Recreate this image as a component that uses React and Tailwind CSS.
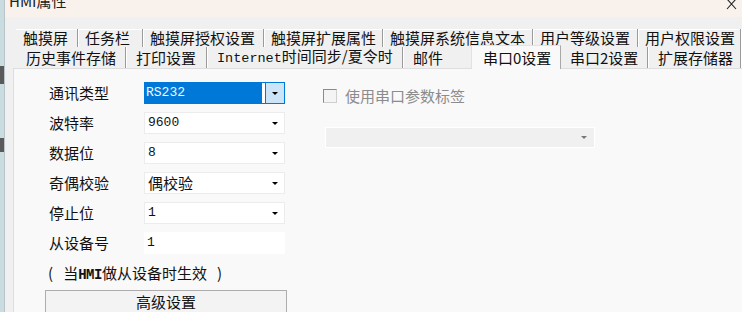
import React from "react";

const CJK = { fontFamily: '"Noto Sans CJK SC", "Noto Sans", sans-serif' };
const MONO = { fontFamily: '"Liberation Mono", "Noto Sans CJK SC", monospace' };

function Arrow({ color = "border-t-black" }) {
  return <div className={`w-0 h-0 border-x-[3px] border-t-[3px] border-x-transparent ${color}`} />;
}

function Tab({ w, children, pl = "pl-[7px]" }) {
  return (
    <div
      className={`h-full flex items-center ${pl} border-r border-r-[#9a9a9a] shadow-[1px_0_0_#ffffff] shrink-0 whitespace-nowrap`}
      style={{ width: w }}
    >
      {children}
    </div>
  );
}

function Combo({ value, mono = true }) {
  return (
    <div className="flex h-[22px] w-[141px] bg-white border border-[#ececec]">
      <div
        className={`flex-1 flex items-center pl-[3px] text-[#111] ${mono ? "text-[13px]" : "text-[15px]"}`}
        style={mono ? MONO : CJK}
      >
        {value}
      </div>
      <div className="w-[19px] flex items-center justify-center">
        <Arrow />
      </div>
    </div>
  );
}

function Row({ label, children }) {
  return (
    <div className="flex items-center h-[22px]">
      <div className="w-[99px] pl-[4px] text-[15px] leading-[22px] text-[#111]">{label}</div>
      {children}
    </div>
  );
}

export default function App() {
  return (
    <div className="w-[742px] h-[312px] overflow-hidden flex bg-[#c8dce0]" style={CJK}>
      {/* desktop strip */}
      <div className="w-[4px] shrink-0 flex flex-col">
        <div className="h-[66px] bg-[#c9dce0]" />
        <div className="h-[18px] bg-[#5a5a5a]" />
        <div className="h-[54px] bg-[#c9dce0]" />
        <div className="h-[14px] bg-[#5a5a5a]" />
        <div className="flex-1 bg-[#c9dce0]" />
      </div>
      {/* window */}
      <div className="flex-1 flex flex-col bg-[#f0f0f0] border-l border-[#b9c4c8] min-w-0">
        {/* title bar */}
        <div className="h-[17px] shrink-0 bg-[#f9f2ec] flex items-start justify-between overflow-hidden">
          <div className="ml-[4px] mt-[-9px] text-[15px] leading-[20px] text-[#222]">HMI属性</div>
          <svg width="12" height="10" viewBox="0 0 12 10" className="mr-[4px]">
            <path d="M1 -1 L10 9 M10 -1 L1 9" stroke="#222" strokeWidth="1.1" fill="none" />
          </svg>
        </div>
        <div className="h-[12px] shrink-0" />
        {/* tab row 1 */}
        <div className="h-[18px] shrink-0 flex ml-[11px] text-[15px] leading-[18px] text-[#111] shadow-[inset_0_1px_0_#ffffff]">
          <Tab w={62}>触摸屏</Tab>
          <Tab w={65}>任务栏</Tab>
          <Tab w={121}>触摸屏授权设置</Tab>
          <Tab w={119}>触摸屏扩展属性</Tab>
          <Tab w={150}>触摸屏系统信息文本</Tab>
          <Tab w={105}>用户等级设置</Tab>
          <Tab w={103}>用户权限设置</Tab>
        </div>
        {/* tab row 2 */}
        <div className="h-[21px] shrink-0 flex items-start ml-[11px] text-[15px] leading-[18px] text-[#111]">
          <Tab w={110} pl="pl-[10px]">历史事件存储</Tab>
          <Tab w={81} pl="pl-[10px]">打印设置</Tab>
          <Tab w={196} pl="pl-[10px]">
            <span className="whitespace-nowrap leading-[18px]">
              <span className="text-[13.5px]" style={MONO}>Internet</span>时间同步/夏令时
            </span>
          </Tab>
          <div className="h-full w-[68px] shrink-0 flex items-center pl-[10px]">邮件</div>
          <div className="relative z-10 mt-[-2px] h-[24px] w-[90px] shrink-0 flex items-center pl-[11px] bg-[#f9f9f9] border-l border-t border-r border-l-[#e2e2e2] border-t-[#e2e2e2] border-r-[#a8a8a8]">
            串口0设置
          </div>
          <Tab w={87} pl="pl-[9px]">串口2设置</Tab>
          <Tab w={93} pl="pl-[10px]">扩展存储器</Tab>
        </div>
        {/* panel */}
        <div className="flex-1 ml-[8px] bg-[#f9f9f9] border-l border-t border-[#dedede] flex pt-[13px] pl-[31px]">
          {/* left form */}
          <div className="w-[242px] shrink-0 flex flex-col">
            <div className="flex flex-col gap-[8px]">
              <Row label="通讯类型">
                <div className="flex h-[22px] w-[141px] bg-white border border-[#0078d7]">
                  <div className="flex-1 flex items-center pl-[1px] bg-[#0078d7] text-[13px] text-[#f4f8ff]" style={MONO}>
                    RS232
                  </div>
                  <div className="w-[3px]" />
                  <div className="w-[19px] flex items-center justify-center bg-[#cce4f7] border-l border-[#0078d7]">
                    <Arrow />
                  </div>
                </div>
              </Row>
              <Row label="波特率">
                <Combo value="9600" />
              </Row>
              <Row label="数据位">
                <Combo value="8" />
              </Row>
              <Row label="奇偶校验">
                <Combo value="偶校验" mono={false} />
              </Row>
              <Row label="停止位">
                <Combo value="1" />
              </Row>
              <Row label="从设备号">
                <div className="h-[22px] w-[141px] bg-white flex items-center pl-[3px] text-[13px] text-[#111]" style={MONO}>
                  1
                </div>
              </Row>
            </div>
            <div className="mt-[9px] h-[20px] pl-[3px] text-[15px] leading-[20px] text-[#111] whitespace-nowrap">
              (&nbsp;&nbsp;&nbsp;当<span className="text-[14px] font-bold tracking-[-0.5px]" style={MONO}>HMI</span>做从设备时生效&nbsp;&nbsp;&nbsp;)
            </div>
            <div className="mt-[7px] h-[30px] w-[242px] border border-[#adadad] bg-[#f3f3f3] flex justify-center pt-[1px] text-[15px] leading-[20px] text-[#111]">
              高级设置
            </div>
          </div>
          {/* right column */}
          <div className="ml-[36px] mt-[6px] flex flex-col">
            <div className="flex items-center h-[16px]">
              <div className="w-[14px] h-[14px] border border-t-[#8a8a8a] border-l-[#8a8a8a] border-r-[#cfcfcf] border-b-[#cfcfcf] bg-[#f4f4f4]" />
              <div className="ml-[8px] text-[15px] leading-[16px] text-[#8c8c8c]">使用串口参数标签</div>
            </div>
            <div className="mt-[23px] ml-[2px] h-[21px] w-[270px] bg-[#f0f0f0] border border-white flex items-center justify-end pr-[7px]">
              <Arrow color="border-t-[#777]" />
            </div>
          </div>
        </div>
      </div>
    </div>
  );
}
